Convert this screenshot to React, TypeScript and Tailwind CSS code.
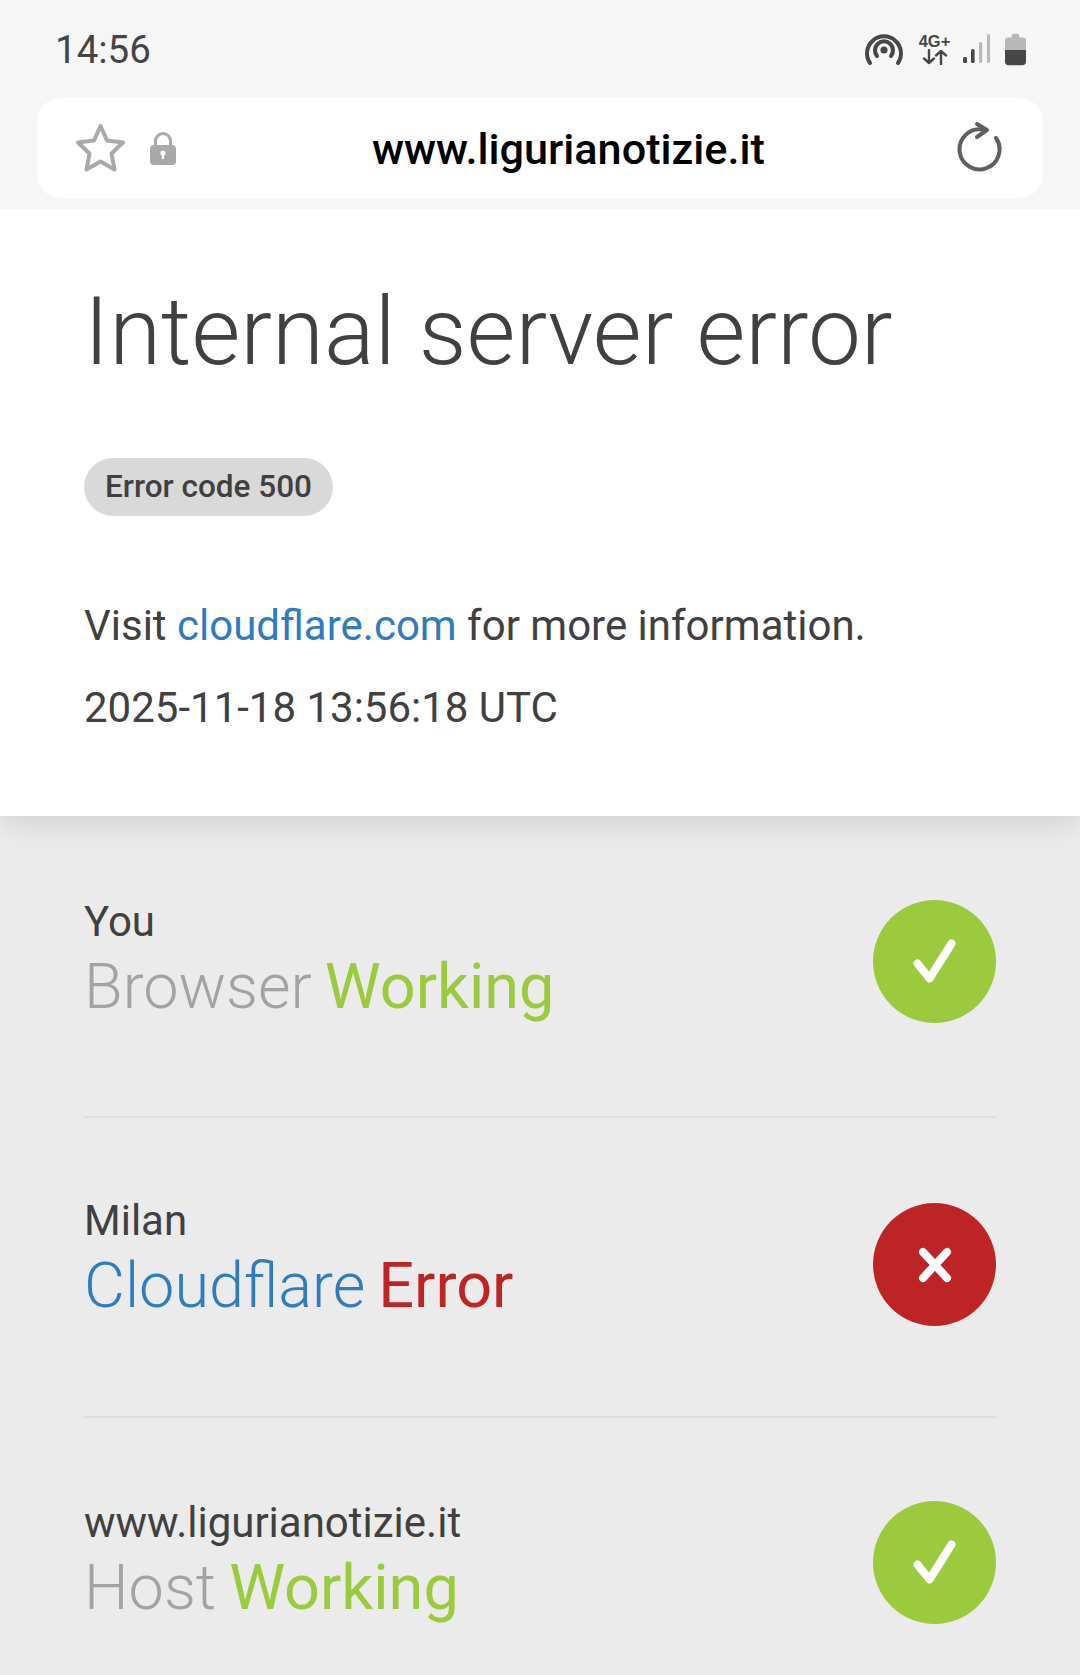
const Check = () => (
  <svg width="60" height="60" viewBox="0 0 60 60" fill="none" stroke="white" strokeWidth="8" strokeLinecap="round" strokeLinejoin="round">
    <path d="M12.5 31.5 L24.5 46.5 L46.5 11.5" />
  </svg>
);

const Cross = () => (
  <svg width="34" height="36" viewBox="0 0 34 36" fill="none" stroke="white" strokeWidth="8" strokeLinecap="round">
    <path d="M5 5 L29 31 M29 5 L5 31" />
  </svg>
);

function Row({ top, name, nameClass, status, statusClass, bg, icon, cls, textCls }: { top: string; name: string; nameClass: string; status: string; statusClass: string; bg: string; icon: React.ReactNode; cls: string; textCls: string }) {
  return (
    <div className={`flex items-center justify-between ${cls}`}>
      <div className={textCls}>
        <div className="text-[42px] leading-[50px] text-[#404040] whitespace-nowrap">{top}</div>
        <div className="text-[63px] leading-[80px] font-light whitespace-nowrap">
          <span className={nameClass}>{name}</span>
          <span className={`${statusClass} ml-[13px] font-normal`}>{status}</span>
        </div>
      </div>
      <div className={`w-[123px] h-[123px] rounded-full flex items-center justify-center ${bg}`}>{icon}</div>
    </div>
  );
}

export default function App() {
  return (
    <div className="w-[1080px] h-[1675px] overflow-hidden bg-[#ebebeb] font-['Roboto',sans-serif]">
      <div className="bg-[#f6f6f6] h-[209px] px-[37px] flex flex-col relative z-10">
        <div className="h-[98px] flex items-center justify-between pl-[18px] pr-[17px]">
          <span className="text-[38.5px] text-[#444] font-normal leading-none pt-[3px]">14:56</span>
          <div className="flex items-center">
            <svg width="40" height="34" viewBox="0 0 40 34" fill="none" stroke="#474747" strokeWidth="4" strokeLinecap="round">
              <path d="M6 31 A17 17 0 1 1 34 31" />
              <path d="M13 24 A9 9 0 1 1 27 24" />
              <circle cx="20" cy="18" r="3.6" fill="#474747" stroke="none" />
            </svg>
            <div className="flex flex-col items-center w-[33px] ml-[14px]">
              <span className="text-[16.5px] leading-[15px] font-bold text-[#474747] font-['Liberation_Sans',sans-serif]">4G+</span>
              <svg width="26" height="16" viewBox="0 0 26 16" fill="none" stroke="#474747" strokeWidth="2.4" strokeLinecap="round" strokeLinejoin="round">
                <path d="M7 1 V14 M2 9.5 L7 14 L12 9.5 M19 15 V2 M14 6.5 L19 2 L24 6.5" />
              </svg>
            </div>
            <svg className="ml-[11px]" width="30" height="30" viewBox="0 0 30 30">
              <rect x="1" y="23" width="4" height="6" rx="1.5" fill="#474747" />
              <rect x="9" y="15" width="3.6" height="14" rx="1.5" fill="#474747" />
              <rect x="17" y="8" width="3.2" height="21" rx="1.5" fill="#b8b8b8" />
              <rect x="25" y="0" width="3" height="29" rx="1.5" fill="#b8b8b8" />
            </svg>
            <svg className="ml-[13px]" width="21" height="33" viewBox="0 0 22 33">
              <path d="M7 2 Q7 0 9 0 H13 Q15 0 15 2 V4 H19 Q22 4 22 7 V17 H0 V7 Q0 4 3 4 H7 Z" fill="#b8b8b8" />
              <path d="M0 17 H22 V29 Q22 33 18 33 H4 Q0 33 0 29 Z" fill="#474747" />
            </svg>
          </div>
        </div>
        <div className="h-[100px] bg-white rounded-[24px] flex items-center pl-[38px] pr-[40px]">
          <div className="flex items-center gap-[24px]">
            <svg width="51" height="50" viewBox="0 0 51 50" fill="none" stroke="#a9a9a9" strokeWidth="4" strokeLinejoin="round">
              <path d="M25.5 3 L32 17.5 L48 19.5 L36.5 30.5 L39.5 46.5 L25.5 38.5 L11.5 46.5 L14.5 30.5 L3 19.5 L19 17.5 Z" />
            </svg>
            <svg width="26" height="33" viewBox="0 0 26 33">
              <path d="M5.5 14 V9 A7.5 7.5 0 0 1 20.5 9 V14" fill="none" stroke="#a9a9a9" strokeWidth="3" />
              <rect x="0" y="13" width="26" height="20" rx="4" fill="#a9a9a9" />
              <circle cx="13" cy="21" r="2.6" fill="white" />
              <rect x="11.8" y="21" width="2.4" height="6" fill="white" />
            </svg>
          </div>
          <span className="ml-[196px] mr-auto pt-[4px] text-[43.2px] font-medium text-black leading-none whitespace-nowrap">www.ligurianotizie.it</span>
          <svg width="46" height="54" viewBox="0 0 46 54" fill="none" stroke="#5f5f5f" strokeWidth="4" strokeLinecap="round" strokeLinejoin="round">
            <path d="M39 17 A20 20 0 1 1 25 8.5" />
            <path d="M20 3 L30 9 L20 16" />
          </svg>
        </div>
      </div>
      <div className="bg-white h-[607px] pl-[84px] pr-[60px] pt-[70px] shadow-[0_6px_28px_rgba(0,0,0,0.12)] relative">
        <h1 className="text-[94.4px] leading-[106px] font-light text-[#404040] whitespace-nowrap">Internal server error</h1>
        <div className="mt-[73px] inline-flex items-center h-[58px] px-[21px] rounded-full bg-[#d9d9d9] text-[31.5px] font-medium text-[#404040]">Error code 500</div>
        <p className="mt-[86px] text-[42px] leading-[47px] text-[#404040] whitespace-nowrap">Visit <span className="text-[#2f7bbf]">cloudflare.com</span> for more information.</p>
        <p className="mt-[35px] text-[42px] leading-[47px] text-[#404040] whitespace-nowrap">2025-11-18 13:56:18 UTC</p>
      </div>
      <div className="px-[84px] pt-[84px]">
        <Row cls="h-[123px] mb-[93px]" textCls="" top="You" name="Browser" nameClass="text-[#a3a3a3]" status="Working" statusClass="text-[#9bca3e]" bg="bg-[#9bca3e]" icon={<Check />} />
        <div className="border-t-2 border-[#dedede]" />
        <Row cls="h-[123px] mt-[85px] mb-[90px]" textCls="pb-[8px]" top="Milan" name="Cloudflare" nameClass="text-[#2f7bbf]" status="Error" statusClass="text-[#bd2426]" bg="bg-[#bd2426]" icon={<Cross />} />
        <div className="border-t-2 border-[#dedede]" />
        <Row cls="h-[123px] mt-[83px]" textCls="" top="www.ligurianotizie.it" name="Host" nameClass="text-[#a3a3a3]" status="Working" statusClass="text-[#9bca3e]" bg="bg-[#9bca3e]" icon={<Check />} />
      </div>
    </div>
  );
}
